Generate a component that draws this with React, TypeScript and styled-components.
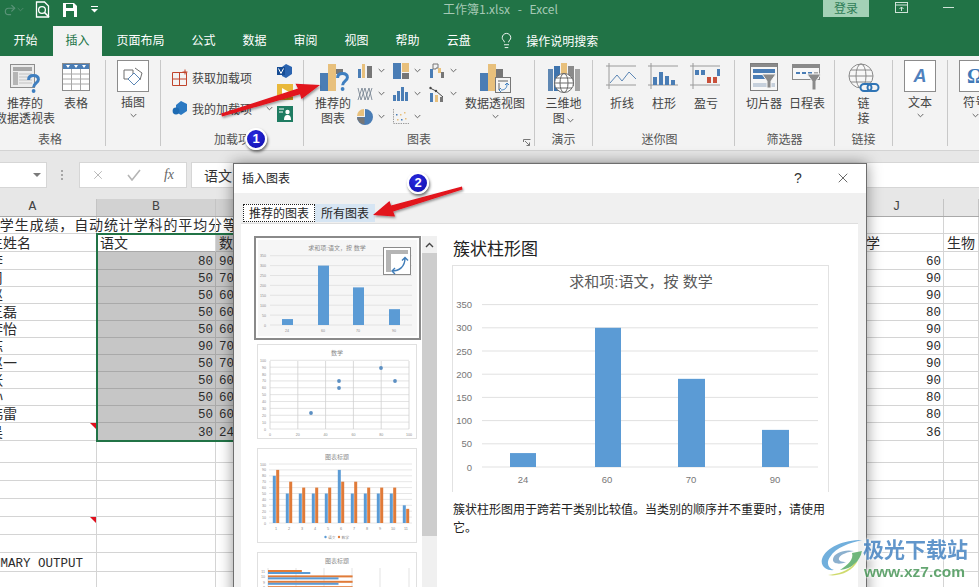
import React from 'react';
import styled, { createGlobalStyle } from 'styled-components';
import { Lightbulb, Redo2, X } from 'lucide-react';

const SANS = `"Noto Sans CJK SC", "Liberation Sans", sans-serif`;
const CELL = `"Liberation Sans", "Noto Sans CJK SC", sans-serif`;
const MONO = `"Liberation Mono", "Noto Sans CJK SC", monospace`;
const BLUE = '#4a7db5';
const GOLD = '#e8c07c';
const GREY = '#767676';

const Global = createGlobalStyle`
  html, body { margin: 0; padding: 0; background: #fff; }
  * { box-sizing: border-box; }
`;

const Page = styled.div`
  position: relative;
  width: 979px;
  height: 587px;
  overflow: hidden;
  display: flex;
  flex-direction: column;
  background: #fff;
  font-family: ${SANS};
  font-size: 12px;
  color: #444;
`;

/* ---------- title bar ---------- */
const TitleBar = styled.header`
  height: 25px;
  flex: none;
  display: flex;
  background: #217346;
`;
const QuickAccess = styled.div`
  width: 443px;
  flex: none;
  display: flex;
  align-items: center;
  padding: 0 0 6px 3px;
  color: #5a9378;
`;
const QuickIcon = styled.svg<{ $gap: number }>`
  margin-left: ${p => p.$gap}px;
  flex: none;
`;
const DocTitle = styled.div`
  width: 380px;
  flex: none;
  padding-top: 1px;
  line-height: 16px;
  color: #a5c9b5;
  word-spacing: 5px;
`;
const SignIn = styled.div`
  width: 46px;
  height: 17px;
  flex: none;
  background: #a3d1b6;
  color: #2f7d56;
  text-align: center;
  line-height: 16px;
`;
const WindowIcon = styled.svg<{ $gap: number }>`
  margin: 2px 0 0 ${p => p.$gap}px;
  flex: none;
`;

/* ---------- tabs ---------- */
const TabBar = styled.nav`
  height: 31px;
  flex: none;
  display: flex;
  background: #217346;
  color: #fff;
`;
const Tab = styled.div<{ $active?: boolean }>`
  flex: none;
  padding: ${p => (p.$active ? '0 12.5px' : '0 13.5px')};
  margin: ${p => (p.$active ? '1px 1px 0 2px' : '0')};
  background: ${p => (p.$active ? '#f3f3f3' : 'transparent')};
  color: ${p => (p.$active ? '#217346' : '#fff')};
  line-height: ${p => (p.$active ? '28px' : '30px')};
`;
const SearchHint = styled.div`
  display: flex;
  align-items: center;
  gap: 11px;
  margin-left: 14px;
  padding-bottom: 1px;
`;

/* ---------- ribbon ---------- */
const Ribbon = styled.section`
  height: 95px;
  flex: none;
  display: flex;
  overflow: hidden;
  background: #f3f3f3;
  border-bottom: 1px solid #d3d3d3;
`;
const Group = styled.div<{ $w: number; $pad?: number }>`
  position: relative;
  width: ${p => p.$w}px;
  flex: none;
  display: flex;
  flex-direction: column;
  padding-left: ${p => p.$pad ?? 0}px;
`;
const GroupBody = styled.div`
  height: 74px;
  flex: none;
  display: flex;
`;
const GroupLabel = styled.div<{ $shift?: number }>`
  height: 18px;
  line-height: 18px;
  text-align: center;
  color: #555;
  margin-left: ${p => p.$shift ?? 0}px;
`;
const Divider = styled.div`
  width: 1px;
  flex: none;
  margin: 4px 0 4px;
  background: #c8c8c8;
`;
const BigButton = styled.div<{ $w: number; $shift?: number }>`
  width: ${p => p.$w}px;
  flex: none;
  margin-left: ${p => p.$shift ?? 0}px;
  padding-top: 7px;
  display: flex;
  flex-direction: column;
  align-items: center;
`;
const BigIcon = styled.div`
  height: 32px;
  flex: none;
  display: flex;
  align-items: flex-start;
  justify-content: center;
`;
const BigLabel = styled.div`
  line-height: 15px;
  text-align: center;
  white-space: nowrap;
  color: #444;
`;
const BoxButton = styled.div<{ $w: number }>`
  width: ${p => p.$w}px;
  flex: none;
  padding-top: 4px;
  display: flex;
  flex-direction: column;
  align-items: center;
`;
const IconBox = styled.div`
  width: 32px;
  height: 32px;
  flex: none;
  margin-bottom: 2px;
  display: flex;
  align-items: center;
  justify-content: center;
  background: #fff;
  border: 1px solid #8c8c8c;
`;
const BoxGlyph = styled.span`
  font-family: "Liberation Serif", serif;
  font-weight: 700;
  font-size: 20px;
  color: #3f79b8;
`;
const ArrowSlot = styled.div`
  height: 12px;
  display: flex;
  align-items: center;
`;
const AddinColumn = styled.div`
  width: 116px;
  flex: none;
  padding: 9px 0 0 11px;
  display: flex;
  flex-direction: column;
  gap: 7px;
`;
const AddinRow = styled.div`
  height: 24px;
  display: flex;
  align-items: center;
  gap: 3px;
  white-space: nowrap;
`;
const AddinChevron = styled.span`
  margin-left: 11px;
  display: flex;
`;
const AddinIcons = styled.div`
  padding-top: 8px;
  display: flex;
  flex-direction: column;
  gap: 6px;
`;
const SmallGrid = styled.div`
  width: 108px;
  flex: none;
  padding-top: 3px;
  display: grid;
  grid-template-columns: repeat(3, 36px);
  grid-auto-rows: 23px;
`;
const SmallCell = styled.div`
  display: flex;
  align-items: center;
  gap: 5px;
`;
const Launcher = styled.svg`
  position: absolute;
  right: 3px;
  bottom: 3px;
`;

const Chev = ({ color = '#666' }: { color?: string }) => (
  <svg width="7" height="5" viewBox="0 0 7 5">
    <path d="M.7 1 3.5 3.8 6.3 1" fill="none" stroke={color} strokeWidth="1" />
  </svg>
);

/* ---------- ribbon icons ---------- */
const Question = ({ x, y }: { x: number; y: number }) => (
  <g transform={`translate(${x} ${y})`}>
    <path d="M1.6 6C1.6 3 3.6 1.6 6.4 1.6S11.4 3 11.4 5.6c0 3.2-4.8 3.4-4.8 7.6" fill="none" stroke="#3f7fc0" strokeWidth="3" />
    <circle cx="6.6" cy="17" r="1.9" fill="#3f7fc0" />
  </g>
);
const RecPivotIcon = () => (
  <svg width="30" height="32" viewBox="0 0 30 32">
    <rect x=".5" y="1.5" width="24" height="23" fill="#ececec" stroke="#8d8d8d" />
    <rect x="3" y="4" width="19" height="4" fill="#a8a8a8" />
    <rect x="3" y="9" width="5" height="13" fill="#b5b5b5" />
    <path d="M9 11h13M9 14h13M9 17h13M9 20h13" stroke="#c2c2c2" />
    <Question x={17} y={11} />
  </svg>
);
const TableIcon = () => (
  <svg width="28" height="29" viewBox="0 0 28 29">
    <rect x=".5" y=".5" width="27" height="27" fill="#fff" stroke="#8d8d8d" />
    <rect x="1" y="1" width="26" height="5" fill="#4a7db5" />
    <path d="M4 2h4L6 5zM12 2h4l-2 3zM20 2h4l-2 3z" fill="#fff" />
    <path d="M1 11h26M1 16h26M1 21h26M9.5 6v21M18.5 6v21" stroke="#a8a8a8" />
  </svg>
);
const ShapesIcon = () => (
  <svg width="22" height="22" viewBox="0 0 22 22">
    <path d="M2 5h9v9H2z" fill="none" stroke="#6f6f6f" />
    <path d="M13 3l7 5-2 7" fill="none" stroke="#6f6f6f" />
    <path d="M12 8l6 6-6 6-6-6z" fill="#fff" stroke="#5b86b5" />
  </svg>
);
const StoreIcon = () => (
  <svg width="17" height="17" viewBox="0 0 17 17">
    <path d="M.5 3.5h14v13H.5zM7.5 3.5v13M.5 10h14" fill="none" stroke="#c0442c" />
    <path d="M13 .5v5M10.5 3h5" stroke="#c0442c" />
  </svg>
);
const MyAddinIcon = () => (
  <svg width="17" height="17" viewBox="0 0 17 17">
    <path d="M9 1l6 3v7l-6 4-5-3V5z" fill="#2b79c2" />
    <circle cx="4" cy="11" r="3.4" fill="#1e6bb3" />
  </svg>
);
const VisioIcon = () => (
  <svg width="16" height="14" viewBox="0 0 16 14">
    <path d="M9 0l6 3v7l-6 4-4-2V3z" fill="#2b64b0" />
    <rect x="0" y="3" width="8" height="8" fill="#174d94" />
    <path d="M1.5 4.5 4 9.5l2.5-5" fill="none" stroke="#fff" />
  </svg>
);
const PlayIcon = () => (
  <svg width="16" height="16" viewBox="0 0 16 16">
    <rect width="16" height="16" fill="#e9b83a" />
    <path d="M5 4l7 4-7 4z" fill="#fff" />
    <rect y="13" width="16" height="3" fill="#c98f1c" />
  </svg>
);
const PersonIcon = () => (
  <svg width="16" height="16" viewBox="0 0 16 16">
    <rect width="16" height="16" fill="#1f7c62" />
    <path d="M2 3h5M2 6h4" stroke="#fff" />
    <circle cx="10.5" cy="6" r="2.2" fill="#fff" />
    <path d="M7 14c0-4 1.5-5 3.5-5s3.5 1 3.5 5z" fill="#fff" />
  </svg>
);
const RecChartIcon = () => (
  <svg width="32" height="30" viewBox="0 0 32 30">
    <rect x="3" y="10" width="8" height="18" fill={BLUE} />
    <rect x="11" y="1" width="8" height="27" fill={GOLD} />
    <rect x="19" y="6" width="7" height="5" fill={GREY} />
    <Question x={19} y={9} />
  </svg>
);
const ColumnsIcon = () => (
  <svg width="16" height="15" viewBox="0 0 16 15">
    <rect x="1" y="6" width="3" height="9" fill={BLUE} /><rect x="5" y="1" width="3" height="14" fill={GOLD} /><rect x="10" y="3" width="5" height="12" fill={GREY} />
  </svg>
);
const TreemapIcon = () => (
  <svg width="16" height="16" viewBox="0 0 16 16">
    <rect width="8" height="16" fill={BLUE} /><rect x="9" width="7" height="9" fill={GOLD} /><rect x="9" y="10" width="7" height="6" fill={GREY} />
  </svg>
);
const WaterfallIcon = () => (
  <svg width="16" height="15" viewBox="0 0 16 15">
    <path d="M1 15V6h3v9z" fill={BLUE} /><path d="M4 6V1h5v4H7v1z" fill="none" stroke={GREY} /><rect x="9" y="5" width="3" height="5" fill={GOLD} /><rect x="12" y="9" width="3" height="6" fill={GREY} />
  </svg>
);
const StockIcon = () => (
  <svg width="16" height="16" viewBox="0 0 16 16">
    <path d="M1 14 5 2l3 12 4-12 3 12M1 2l3 12 4-12 3 12 4-12" fill="none" stroke="#7b8794" strokeWidth=".9" />
  </svg>
);
const BarsIcon = () => (
  <svg width="16" height="15" viewBox="0 0 16 15">
    <rect x="0" y="9" width="3" height="6" fill={BLUE} /><rect x="4" y="5" width="3" height="10" fill={BLUE} /><rect x="8" y="1" width="3" height="14" fill={BLUE} /><rect x="12" y="6" width="3" height="9" fill={BLUE} />
  </svg>
);
const ComboIcon = () => (
  <svg width="16" height="16" viewBox="0 0 16 16">
    <rect x="1" y="7" width="3" height="9" fill={BLUE} /><rect x="6" y="9" width="3" height="7" fill={GOLD} /><rect x="11" y="11" width="3" height="5" fill={GREY} />
    <path d="M1 2l6 3 7 6" fill="none" stroke="#444" /><circle cx="1.5" cy="2" r="1.2" fill="#444" /><circle cx="7" cy="5" r="1.2" fill="#444" />
  </svg>
);
const PieIcon = () => (
  <svg width="16" height="16" viewBox="0 0 16 16">
    <path d="M8 0a8 8 0 1 1-8 8h8z" fill={BLUE} /><path d="M7 0v7H0a7 7 0 0 1 7-7z" fill={GOLD} /><circle cx="8" cy="8" r="0" />
    <path d="M0 8.5h7.5v7A8 8 0 0 1 0 8.5z" fill={GREY} />
  </svg>
);
const ScatterIcon = () => (
  <svg width="16" height="15" viewBox="0 0 16 15">
    <path d="M.5 0v14.5H16" fill="none" stroke="#9a9a9a" strokeDasharray="1.4 1" />
    <path d="M4 10h1.5v1.5H4zM7 5h1.5v1.5H7zM11 3h1.5v1.5H11zM12 9h1.5v1.5H12z" fill={GOLD} /><path d="M3 5h1.5v1.5H3zM8 10h1.5v1.5H8z" fill={BLUE} />
  </svg>
);
const PivotChartIcon = () => (
  <svg width="32" height="30" viewBox="0 0 32 30">
    <rect x="1" y="10" width="8" height="18" fill={BLUE} /><rect x="9" y="1" width="8" height="27" fill={GOLD} /><rect x="17" y="6" width="7" height="9" fill={GREY} />
    <rect x="16.5" y="14.5" width="15" height="15" fill="#f4f4f4" stroke="#777" />
    <rect x="19" y="17" width="10" height="2" fill="#aaa" /><rect x="19" y="20" width="2" height="7" fill="#aaa" />
    <path d="M22 27c4 0 6-2 6-6m-2 1 2-2 2 2M22 25l-2 2 2 2" fill="none" stroke="#3f7fc0" />
  </svg>
);
const MapIcon = () => (
  <svg width="32" height="31" viewBox="0 0 32 31">
    <rect x="0" y="6" width="5" height="22" fill="#5e87b3" /><rect x="6" y="3" width="6" height="25" fill="#3f74ad" /><rect x="13" y="0" width="6" height="18" fill={GOLD} /><rect x="20" y="3" width="6" height="20" fill="#8a8a8a" /><rect x="27" y="6" width="5" height="22" fill="#a3a3a3" />
    <circle cx="16" cy="20" r="9.5" fill="#fff" stroke="#6a6a6a" />
    <ellipse cx="16" cy="20" rx="4" ry="9.5" fill="none" stroke="#6a6a6a" /><path d="M6.5 20h19M8 15h16M8 25h16" stroke="#6a6a6a" />
  </svg>
);
const Axes = ({ y = 22 }: { y?: number }) => (
  <path d={`M3 0v26M0 3h30M0 ${y}h30`} stroke="#9a9a9a" fill="none" />
);
const SparkLineIcon = () => (
  <svg width="32" height="27" viewBox="0 0 32 27">
    <Axes /><path d="M4 20l7-8 5 6 7-9 7 7" fill="none" stroke="#5b86b5" />
  </svg>
);
const SparkBarIcon = () => (
  <svg width="32" height="27" viewBox="0 0 32 27">
    <Axes /><rect x="5" y="14" width="4" height="8" fill={BLUE} /><rect x="11" y="9" width="4" height="13" fill={BLUE} /><rect x="17" y="13" width="4" height="9" fill={BLUE} /><rect x="23" y="17" width="4" height="5" fill={BLUE} />
  </svg>
);
const SparkWinIcon = () => (
  <svg width="32" height="27" viewBox="0 0 32 27">
    <path d="M3 0v26M0 3h30M0 22h30" stroke="#9a9a9a" fill="none" />
    <rect x="5" y="7" width="4" height="5" fill={BLUE} /><rect x="11" y="7" width="4" height="5" fill={BLUE} /><rect x="17" y="14" width="4" height="6" fill="#c9503a" /><rect x="23" y="14" width="4" height="6" fill="#c9503a" /><rect x="27" y="6" width="3" height="7" fill={BLUE} />
  </svg>
);
const Funnel = ({ x, y }: { x: number; y: number }) => (
  <path transform={`translate(${x} ${y})`} d="M0 0h14L9 7v7H5V7z" fill="#8a8a8a" stroke="#f3f3f3" />
);
const SlicerIcon = () => (
  <svg width="28" height="28" viewBox="0 0 28 28">
    <rect x=".5" y=".5" width="27" height="27" fill="#f7f7f7" stroke="#7d7d7d" />
    <rect x="1" y="1" width="26" height="3" fill="#8a8a8a" />
    <rect x="3" y="6" width="22" height="4" fill="#4a7db5" /><rect x="3" y="12" width="12" height="4" fill="#4a7db5" /><rect x="3" y="20" width="22" height="4" fill="#c6d0dc" />
    <Funnel x={12} y={11} />
  </svg>
);
const TimelineIcon = () => (
  <svg width="30" height="28" viewBox="0 0 30 28">
    <rect x=".5" y="1.5" width="27" height="15" fill="#f7f7f7" stroke="#8a8a8a" /><rect x="1" y="2" width="26" height="3" fill="#8a8a8a" />
    <path d="M4 10h4M10 10h4M16 10h4" stroke="#4a7db5" strokeWidth="2" /><path d="M22 10h4" stroke="#aaa" strokeWidth="2" />
    <path d="M15 11h14l-5 7v9h-4v-9z" fill="#8a8a8a" stroke="#f3f3f3" />
  </svg>
);
const LinkIcon = () => (
  <svg width="32" height="31" viewBox="0 0 32 31">
    <circle cx="13" cy="13" r="12" fill="#f7f7f7" stroke="#8a8a8a" /><ellipse cx="13" cy="13" rx="5" ry="12" fill="none" stroke="#8a8a8a" /><path d="M1 13h24M3 7h20M3 19h20" stroke="#8a8a8a" />
    <rect x="12.5" y="21" width="11" height="7" rx="3.5" fill="#f3f3f3" stroke="#2f74b5" strokeWidth="2" /><rect x="19.5" y="21" width="11" height="7" rx="3.5" fill="none" stroke="#2f74b5" strokeWidth="2" />
  </svg>
);
const TextGlyph = styled.span`
  font-family: "Liberation Sans", sans-serif;
  font-style: italic;
  font-weight: 700;
  font-size: 18px;
  color: #4f81bd;
`;

/* ---------- formula bar ---------- */
const FormulaBar = styled.div`
  height: 39px;
  flex: none;
  display: flex;
  align-items: flex-start;
  padding-top: 11px;
  background: #e7e7e7;
`;
const NameBox = styled.div`
  width: 47px;
  height: 26px;
  flex: none;
  display: flex;
  align-items: center;
  justify-content: flex-end;
  padding-right: 5px;
  background: #fff;
  border: 1px solid #d6d6d6;
  border-left: 0;
`;
const Caret = styled.span`
  width: 0;
  height: 0;
  border-left: 4px solid transparent;
  border-right: 4px solid transparent;
  border-top: 4px solid #7a7a7a;
`;
const Grip = styled.span`
  width: 2px;
  height: 11px;
  margin: 8px 16px 0 14px;
  flex: none;
  background: repeating-linear-gradient(#a6a6a6 0 2px, transparent 2px 4px);
`;
const FormulaButtons = styled.div`
  width: 108px;
  height: 26px;
  flex: none;
  display: flex;
  align-items: center;
  justify-content: space-between;
  padding: 0 12px 0 11px;
  background: #fff;
  border: 1px solid #d6d6d6;
`;
const FxLabel = styled.span`
  font-family: "Liberation Serif", serif;
  font-style: italic;
  font-size: 14px;
  color: #666;
`;
const FormulaInput = styled.div`
  flex: 1;
  height: 26px;
  margin-left: 4px;
  padding-left: 12px;
  background: #fff;
  border: 1px solid #d6d6d6;
  border-right: 0;
  font-size: 14px;
  line-height: 24px;
  color: #333;
`;

/* ---------- sheet ---------- */
const COLS = '97px 119px 20px 614px 94px 35px';
const HeaderRow = styled.div`
  height: 27px;
  flex: none;
  display: grid;
  grid-template-columns: ${COLS};
  align-items: end;
  background: #e7e7e7;
  border-bottom: 1px solid #a9a9a9;
`;
const ColHead = styled.div<{ $sel?: boolean; $inset?: number }>`
  height: 17px;
  padding-right: ${p => p.$inset ?? 0}px;
  line-height: 16px;
  text-align: center;
  font-family: ${MONO};
  font-size: 13px;
  color: #444;
  background: ${p => (p.$sel ? '#d2d2d2' : 'transparent')};
  border-right: 1px solid #c4c4c4;
`;
const Sheet = styled.div`
  position: relative;
  flex: 1;
`;
const Row = styled.div<{ $h: number }>`
  height: ${p => p.$h}px;
  display: grid;
  grid-template-columns: ${COLS};
`;
const Cell = styled.div<{ $sel?: boolean; $white?: boolean; $num?: boolean; $note?: boolean; $mono?: boolean }>`
  position: relative;
  display: flex;
  align-items: flex-end;
  justify-content: ${p => (p.$num ? 'flex-end' : 'flex-start')};
  padding: ${p => (p.$num ? '0 2px 0 0' : '0 0 0 3px')};
  white-space: nowrap;
  font-family: ${p => (p.$mono ? MONO : CELL)};
  font-size: ${p => (p.$mono ? 12.5 : 14)}px;
  line-height: ${p => (p.$mono ? 14 : 16)}px;
  color: #2c2c2c;
  background: ${p => (p.$sel ? '#c6c6c6' : 'transparent')};
  border-right: 1px solid ${p => (p.$sel ? '#a9a9a9' : '#d4d4d4')};
  border-bottom: 1px solid ${p => (p.$sel ? '#a9a9a9' : '#d4d4d4')};
  ${p => p.$white && 'border-bottom-color:#a9a9a9;'}
  &::after {
    content: ${p => (p.$note ? '""' : 'none')};
    position: absolute;
    top: 0;
    right: 0;
    border-top: 6px solid #e0101e;
    border-left: 6px solid transparent;
  }
`;
const CellText = styled.span<{ $indent?: number; $track?: number }>`
  margin-left: ${p => p.$indent ?? 0}px;
  letter-spacing: ${p => p.$track ?? 0}px;
`;
const Digits = styled.span`
  display: block;
  font-family: ${MONO};
  font-size: 12.5px;
  line-height: 14px;
`;
const Selection = styled.div`
  position: absolute;
  left: 96px;
  top: 16px;
  width: 300px;
  height: 209px;
  border: 2px solid #217346;
  pointer-events: none;
`;

/* ---------- dialog ---------- */
const Dialog = styled.div`
  position: absolute;
  left: 233px;
  top: 163px;
  width: 634px;
  height: 440px;
  display: flex;
  flex-direction: column;
  background: #f0f0f0;
  border: 1px solid #6e6e6e;
  box-shadow: 0 0 14px rgba(0, 0, 0, 0.42);
  color: #262626;
`;
const DialogHead = styled.div`
  height: 29px;
  flex: none;
  display: flex;
  align-items: center;
  padding: 0 15px 2px 8px;
  background: #fff;
`;
const DialogTitle = styled.div`
  flex: 1;
`;
const HelpMark = styled.span`
  width: 41px;
  font-family: "Liberation Sans", sans-serif;
  font-size: 14px;
  color: #333;
`;
const DialogTabs = styled.div`
  height: 30px;
  flex: none;
  display: flex;
  align-items: flex-end;
  padding: 0 0 1px 9px;
`;
const DialogTab = styled.div<{ $active?: boolean }>`
  height: 18px;
  padding: 0 5px;
  line-height: 16px;
  background: ${p => (p.$active ? '#fff' : '#d6e5f3')};
  border: 1px ${p => (p.$active ? 'dotted #222' : 'solid #d6e5f3')};
`;
const DialogPanel = styled.div`
  flex: 1;
  display: flex;
  margin: 0 8px 0 7px;
  background: #fff;
  border-top: 1px solid #dedede;
  min-height: 0;
`;
const ThumbColumn = styled.div`
  width: 181px;
  flex: none;
  padding: 12px 0 0 13px;
  overflow: hidden;
`;
const Thumb = styled.div<{ $selected?: boolean; $gap?: number }>`
  display: flex;
  width: ${p => (p.$selected ? 167 : 160)}px;
  height: ${p => (p.$selected ? 104 : 95)}px;
  margin: ${p => p.$gap ?? 0}px 0 0 ${p => (p.$selected ? 0 : 3)}px;
  background: #fff;
  border: ${p => (p.$selected ? '2px solid #8a8a8a' : '1px solid #e0e0e0')};
  padding: ${p => (p.$selected ? 2 : 0)}px;
`;
const Scrollbar = styled.div`
  width: 15px;
  flex: none;
  margin-top: 12px;
  background: #f0f0f0;
`;
const ScrollArrow = styled.div`
  height: 17px;
  display: flex;
  align-items: center;
  justify-content: center;
`;
const ScrollThumb = styled.div`
  height: 283px;
  background: #cdcdcd;
`;
const Details = styled.div`
  flex: 1;
  padding: 12px 0 0 16px;
`;
const DetailTitle = styled.div`
  font-size: 17px;
  line-height: 24px;
  color: #222;
`;
const MainChart = styled.div`
  display: flex;
  width: 377px;
  height: 227px;
  margin: 5px 0 0 -1px;
  border: 1px solid #e2e2e2;
  border-bottom: 0;
`;
const DetailText = styled.p`
  width: 376px;
  margin: 8px 0 0;
  line-height: 18px;
  color: #222;
`;

/* ---------- overlays ---------- */
const Marks = styled.svg`
  position: absolute;
  inset: 0;
  pointer-events: none;
`;
const Badge = styled.div<{ $x: number; $y: number }>`
  position: absolute;
  left: ${p => p.$x - 11}px;
  top: ${p => p.$y - 11}px;
  width: 22px;
  height: 22px;
  border-radius: 50%;
  background: radial-gradient(circle at 40% 35%, #2a2ae0, #0d0da8);
  border: 2px solid #fff;
  box-shadow: 1px 2px 3px rgba(0, 0, 0, 0.55);
  color: #fff;
  font-family: "Liberation Sans", sans-serif;
  font-weight: 700;
  font-size: 13px;
  line-height: 18px;
  text-align: center;
`;
const Watermark = styled.div`
  position: absolute;
  left: 820px;
  top: 537px;
  display: flex;
  opacity: 0.88;
  pointer-events: none;
`;
const WatermarkText = styled.div`
  display: flex;
  flex-direction: column;
  margin-left: 1px;
`;
const WatermarkName = styled.div`
  font-weight: 700;
  font-size: 21px;
  line-height: 23px;
  color: #4c88c4;
  text-shadow: 0 0 3px #fff, 0 0 3px #fff;
  white-space: nowrap;
`;
const WatermarkUrl = styled.div`
  margin: 3px 0 0 1px;
  font-family: "Liberation Sans", sans-serif;
  font-weight: 700;
  font-size: 15.5px;
  line-height: 17px;
  color: #4f9a5e;
  text-shadow: 0 0 3px #fff, 0 0 3px #fff;
`;

/* ---------- chart drawings ---------- */
const CHART_FONT = 'Liberation Sans, Noto Sans CJK SC, sans-serif';
const MainChartDrawing = () => {
  const y0 = 467;
  const step = 23.2;
  const bars = [
    [510, 26, 30, '24', 523],
    [595, 26, 300, '60', 607],
    [678, 27, 190, '70', 691],
    [762, 27, 80, '90', 775],
  ] as const;
  return (
    <svg width="100%" height="100%" viewBox="453 266 375 226" fontFamily={CHART_FONT}>
      <text x="641" y="287" fontSize="15" textAnchor="middle" fill="#595959">求和项:语文，按 数学</text>
      {[0, 1, 2, 3, 4, 5, 6, 7].map(i => (
        <g key={i}>
          <line x1="482" x2="818" y1={y0 - i * step} y2={y0 - i * step} stroke="#e1e1e1" />
          <text x="472" y={y0 - i * step + 3.5} fontSize="9.5" textAnchor="end" fill="#777">{i * 50}</text>
        </g>
      ))}
      {bars.map(([x, w, v, label, cx]) => (
        <g key={label}>
          <rect x={x} y={y0 - (v / 50) * step} width={w} height={(v / 50) * step} fill="#5b9bd5" />
          <text x={cx} y="483" fontSize="9.5" textAnchor="middle" fill="#777">{label}</text>
        </g>
      ))}
    </svg>
  );
};
const RecommendedThumb = () => {
  const y0 = 325;
  const step = 9.9;
  const bars = [[282, 30, '24', 287], [318, 300, '60', 323], [353, 190, '70', 358], [389, 80, '90', 394]] as const;
  return (
    <svg width="100%" height="100%" viewBox="258 240 159 96" fontFamily={CHART_FONT}>
      <rect x="258" y="240" width="159" height="96" fill="#f6f6f6" />
      <text x="337" y="250" fontSize="6" textAnchor="middle" fill="#8a8a8a">求和项:语文，按 数学</text>
      {[0, 1, 2, 3, 4, 5, 6, 7].map(i => (
        <g key={i}>
          <line x1="270" x2="412" y1={y0 - i * step} y2={y0 - i * step} stroke="#dedede" strokeWidth=".8" />
          <text x="266" y={y0 - i * step + 1.5} fontSize="3.6" textAnchor="end" fill="#8a8a8a">{i * 50}</text>
        </g>
      ))}
      {bars.map(([x, v, label, cx]) => (
        <g key={label}>
          <rect x={x} y={y0 - (v / 50) * step} width="11" height={(v / 50) * step} fill="#5b9bd5" />
          <text x={cx} y="332" fontSize="3.6" textAnchor="middle" fill="#8a8a8a">{label}</text>
        </g>
      ))}
      <rect x="383.5" y="247.5" width="27" height="27" fill="#fff" stroke="#8a8a8a" />
      <rect x="386" y="250" width="22" height="4" fill="#b5b5b5" />
      <rect x="386" y="250" width="5" height="22" fill="#b5b5b5" />
      <path d="M392 271c7 0 13-4 13-13m-3 2.5 3-3 3 3M395 268l-3 3 3 3" fill="none" stroke="#3f7cb8" strokeWidth="1.4" />
    </svg>
  );
};
const ScatterThumb = () => {
  const ys = [0, 1, 2, 3, 4, 5, 6, 7, 8, 9, 10];
  const xs = [270, 297.8, 325.6, 353.4, 381.2, 409];
  const pts = [[311, 413], [339, 381], [339, 388], [381, 368], [395, 381]];
  return (
    <svg width="100%" height="100%" viewBox="258 345 158 93" fontFamily={CHART_FONT}>
      <text x="337" y="355" fontSize="6" textAnchor="middle" fill="#8a8a8a">数学</text>
      {ys.map(i => (
        <g key={i}>
          <line x1="270" x2="409" y1={429 - i * 6.87} y2={429 - i * 6.87} stroke="#dcdcdc" strokeWidth=".8" />
          <text x="266" y={430.5 - i * 6.87} fontSize="3.6" textAnchor="end" fill="#8a8a8a">{i * 10}</text>
        </g>
      ))}
      {xs.map((x, i) => (
        <g key={x}>
          <line x1={x} x2={x} y1="361" y2="429" stroke="#cfcfcf" strokeWidth=".8" />
          <text x={x} y="436" fontSize="3.6" textAnchor="middle" fill="#8a8a8a">{i * 20}</text>
        </g>
      ))}
      {pts.map(([x, y]) => <circle key={`${x}-${y}`} cx={x} cy={y} r="1.9" fill="#5b8fc2" />)}
    </svg>
  );
};
const YU = [80, 50, 50, 50, 50, 90, 50, 50, 50, 50, 30];
const SHU = [90, 70, 60, 60, 60, 70, 70, 60, 60, 60, 24];
const ClusterThumb = () => (
  <svg width="100%" height="100%" viewBox="258 449 158 93" fontFamily={CHART_FONT}>
    <text x="337" y="459" fontSize="6" textAnchor="middle" fill="#8a8a8a">图表标题</text>
    {[0, 1, 2, 3, 4, 5, 6, 7, 8, 9, 10].map(i => (
      <g key={i}>
        <line x1="269" x2="412" y1={523 - i * 5.9} y2={523 - i * 5.9} stroke="#e0e0e0" strokeWidth=".8" />
        <text x="266" y={524.5 - i * 5.9} fontSize="3.6" textAnchor="end" fill="#8a8a8a">{i * 10}</text>
      </g>
    ))}
    {YU.map((v, i) => {
      const cx = 276 + i * 13;
      return (
        <g key={i}>
          <rect x={cx - 3.2} y={523 - v * 0.59} width="3" height={v * 0.59} fill="#5b9bd5" />
          <rect x={cx + 0.2} y={523 - SHU[i] * 0.59} width="3" height={SHU[i] * 0.59} fill="#e07b39" />
          <text x={cx} y="530" fontSize="3.8" textAnchor="middle" fill="#8a8a8a">{i + 1}</text>
        </g>
      );
    })}
    <circle cx="325.5" cy="537" r="1.2" fill="#5b9bd5" />
    <text x="328" y="538.5" fontSize="3.8" fill="#8a8a8a">语文</text>
    <circle cx="339" cy="537" r="1.2" fill="#e07b39" />
    <text x="341.5" y="538.5" fontSize="3.8" fill="#8a8a8a">数学</text>
  </svg>
);
const BarThumb = () => (
  <svg width="100%" height="100%" viewBox="258 553 158 93" fontFamily={CHART_FONT}>
    <text x="337" y="563" fontSize="6" textAnchor="middle" fill="#8a8a8a">图表标题</text>
    {[268, 296, 324, 352, 380, 409].map(x => (
      <line key={x} x1={x} x2={x} y1="568" y2="640" stroke="#dcdcdc" strokeWidth=".8" />
    ))}
    {[10, 9, 8, 7].map((idx, r) => (
      <g key={idx}>
        <rect x="268" y={570 + r * 5.4} width={SHU[idx] * 1.41} height="2" fill="#e07b39" />
        <rect x="268" y={572 + r * 5.4} width={YU[idx] * 1.41} height="2" fill="#5b9bd5" />
        <text x="265" y={573 + r * 5.4} fontSize="3.6" textAnchor="end" fill="#8a8a8a">{idx + 1}</text>
      </g>
    ))}
  </svg>
);

/* ---------- sheet data ---------- */
const NAMES = ['李', '周', '赵', '王磊', '李怡', '陈', '赵一', '张', '孙', '韩雷', '吴'];
const BIO = [60, 90, 90, 80, 90, 90, 90, 90, 80, 80, 36];
const DATA_H = [18, 17, 17, 17, 17, 17, 17, 17, 17, 17, 18];
const TAIL_H = [22, 18, 18, 18, 18, 18, 19, 20];

const TABS = ['开始', '插入', '页面布局', '公式', '数据', '审阅', '视图', '帮助', '云盘'];

export default function App() {
  return (
    <Page>
      <Global />
      <TitleBar>
        <QuickAccess>
          <Redo2 size={14} strokeWidth={2} />
          <Chev color="#4f8a6c" />
          <QuickIcon $gap={11} width="16" height="17" viewBox="0 0 16 17">
            <path d="M1.5 1h8l4 4v11h-12z" fill="none" stroke="#fff" strokeWidth="1.3" />
            <circle cx="7" cy="9" r="3.4" fill="none" stroke="#fff" strokeWidth="1.3" />
            <path d="M9.5 11.5l4.5 4.5" stroke="#fff" strokeWidth="1.6" />
          </QuickIcon>
          <QuickIcon $gap={12} width="14" height="14" viewBox="0 0 14 14">
            <path d="M0 0h11l3 3v11H0z" fill="#fff" />
            <rect x="3" y="1" width="7" height="4" fill="#217346" />
            <rect x="3" y="8" width="8" height="6" fill="#217346" />
          </QuickIcon>
          <QuickIcon $gap={14} width="7" height="7" viewBox="0 0 7 7">
            <path d="M0 .5h7" stroke="#fff" />
            <path d="M0 3h7L3.5 6.5z" fill="#fff" />
          </QuickIcon>
        </QuickAccess>
        <DocTitle>工作簿1.xlsx - Excel</DocTitle>
        <SignIn>登录</SignIn>
        <WindowIcon $gap={26} width="13" height="11" viewBox="0 0 13 11">
          <rect x=".5" y=".5" width="12" height="10" fill="none" stroke="#cfe3d8" />
          <path d="M.5 3h12M6.5 9V5M4.5 7l2-2 2 2" fill="none" stroke="#cfe3d8" />
        </WindowIcon>
        <WindowIcon $gap={35} width="11" height="7" viewBox="0 0 11 7">
          <path d="M0 5.5h11" stroke="#cfe3d8" />
        </WindowIcon>
      </TitleBar>

      <TabBar>
        {TABS.map(t => <Tab key={t} $active={t === '插入'}>{t}</Tab>)}
        <SearchHint>
          <Lightbulb size={17} strokeWidth={1.3} />
          <span>操作说明搜索</span>
        </SearchHint>
      </TabBar>

      <Ribbon>
        <Group $w={105}>
          <GroupBody>
            <BigButton $w={56} $shift={-3}>
              <BigIcon><RecPivotIcon /></BigIcon>
              <BigLabel>推荐的<br />数据透视表</BigLabel>
            </BigButton>
            <BigButton $w={46}>
              <BigIcon><TableIcon /></BigIcon>
              <BigLabel>表格</BigLabel>
            </BigButton>
          </GroupBody>
          <GroupLabel $shift={-5}>表格</GroupLabel>
        </Group>
        <Divider />
        <Group $w={54}>
          <GroupBody>
            <BoxButton $w={54}>
              <IconBox><ShapesIcon /></IconBox>
              <BigLabel>插图</BigLabel>
              <ArrowSlot><Chev /></ArrowSlot>
            </BoxButton>
          </GroupBody>
        </Group>
        <Divider />
        <Group $w={142}>
          <GroupBody>
            <AddinColumn>
              <AddinRow><StoreIcon /><span>获取加载项</span></AddinRow>
              <AddinRow><MyAddinIcon /><span>我的加载项</span><AddinChevron><Chev /></AddinChevron></AddinRow>
            </AddinColumn>
            <AddinIcons>
              <VisioIcon />
              <PlayIcon />
              <PersonIcon />
            </AddinIcons>
          </GroupBody>
          <GroupLabel>加载项</GroupLabel>
        </Group>
        <Divider />
        <Group $w={230} $pad={5}>
          <GroupBody>
            <BigButton $w={48}>
              <BigIcon><RecChartIcon /></BigIcon>
              <BigLabel>推荐的<br />图表</BigLabel>
            </BigButton>
            <SmallGrid>
              {[ColumnsIcon, TreemapIcon, WaterfallIcon, StockIcon, BarsIcon, ComboIcon, PieIcon, ScatterIcon].map((Icon, i) => (
                <SmallCell key={i}><Icon /><Chev /></SmallCell>
              ))}
            </SmallGrid>
            <BigButton $w={60}>
              <BigIcon><PivotChartIcon /></BigIcon>
              <BigLabel>数据透视图</BigLabel>
              <ArrowSlot><Chev /></ArrowSlot>
            </BigButton>
          </GroupBody>
          <GroupLabel $shift={-5}>图表</GroupLabel>
          <Launcher width="8" height="8" viewBox="0 0 8 8">
            <path d="M.5 3V.5H7.5M2 2l4.5 4.5M6.5 3.5v3h-3" fill="none" stroke="#777" />
          </Launcher>
        </Group>
        <Divider />
        <Group $w={57}>
          <GroupBody>
            <BigButton $w={57}>
              <BigIcon><MapIcon /></BigIcon>
              <BigLabel>三维地<br />图 <Chev /></BigLabel>
            </BigButton>
          </GroupBody>
          <GroupLabel>演示</GroupLabel>
        </Group>
        <Divider />
        <Group $w={141} $pad={8}>
          <GroupBody>
            <BigButton $w={42}><BigIcon><SparkLineIcon /></BigIcon><BigLabel>折线</BigLabel></BigButton>
            <BigButton $w={42}><BigIcon><SparkBarIcon /></BigIcon><BigLabel>柱形</BigLabel></BigButton>
            <BigButton $w={42}><BigIcon><SparkWinIcon /></BigIcon><BigLabel>盈亏</BigLabel></BigButton>
          </GroupBody>
          <GroupLabel $shift={-16}>迷你图</GroupLabel>
        </Group>
        <Divider />
        <Group $w={99} $pad={8}>
          <GroupBody>
            <BigButton $w={42}><BigIcon><SlicerIcon /></BigIcon><BigLabel>切片器</BigLabel></BigButton>
            <BigButton $w={44}><BigIcon><TimelineIcon /></BigIcon><BigLabel>日程表</BigLabel></BigButton>
          </GroupBody>
          <GroupLabel $shift={-8}>筛选器</GroupLabel>
        </Group>
        <Divider />
        <Group $w={57}>
          <GroupBody>
            <BigButton $w={57}>
              <BigIcon><LinkIcon /></BigIcon>
              <BigLabel>链<br />接</BigLabel>
            </BigButton>
          </GroupBody>
          <GroupLabel>链接</GroupLabel>
        </Group>
        <Divider />
        <Group $w={54}>
          <GroupBody>
            <BoxButton $w={54}>
              <IconBox><TextGlyph>A</TextGlyph></IconBox>
              <BigLabel>文本</BigLabel>
              <ArrowSlot><Chev /></ArrowSlot>
            </BoxButton>
          </GroupBody>
        </Group>
        <Divider />
        <Group $w={60}>
          <GroupBody>
            <BoxButton $w={54}>
              <IconBox><BoxGlyph>Ω</BoxGlyph></IconBox>
              <BigLabel>符号</BigLabel>
              <ArrowSlot><Chev /></ArrowSlot>
            </BoxButton>
          </GroupBody>
        </Group>
      </Ribbon>

      <FormulaBar>
        <NameBox><Caret /></NameBox>
        <Grip />
        <FormulaButtons>
          <X size={14} color="#b5b5b5" strokeWidth={1.6} />
          <svg width="14" height="12" viewBox="0 0 14 12"><path d="M1 6l4 5 8-10" fill="none" stroke="#b5b5b5" strokeWidth="1.6" /></svg>
          <FxLabel>fx</FxLabel>
        </FormulaButtons>
        <FormulaInput>语文</FormulaInput>
      </FormulaBar>

      <HeaderRow>
        <ColHead $inset={31}>A</ColHead>
        <ColHead $sel>B</ColHead>
        <ColHead $sel />
        <ColHead />
        <ColHead>J</ColHead>
        <ColHead />
      </HeaderRow>

      <Sheet>
        <Row $h={17}>
          <Cell><CellText $indent={-18} $track={0.87}>入学生成绩，自动统计学科的平均分等级</CellText></Cell>
          <Cell /><Cell /><Cell /><Cell /><Cell />
        </Row>
        <Row $h={18}>
          <Cell><CellText $indent={-28}>学生姓名</CellText></Cell>
          <Cell $white>语文</Cell>
          <Cell $sel>数学</Cell>
          <Cell />
          <Cell><CellText $indent={-1}>数学</CellText></Cell>
          <Cell>生物</Cell>
        </Row>
        {NAMES.map((name, i) => (
          <Row key={name} $h={DATA_H[i]}>
            <Cell $note={i === 10}><CellText $indent={-14}>{name}</CellText></Cell>
            <Cell $sel $num><Digits>{YU[i]}</Digits></Cell>
            <Cell $sel><Digits>{SHU[i]}</Digits></Cell>
            <Cell />
            <Cell $num><Digits>{BIO[i]}</Digits></Cell>
            <Cell />
          </Row>
        ))}
        {TAIL_H.map((h, i) => (
          <Row key={i} $h={h}>
            <Cell $note={i === 4} $mono>{i === 6 && <CellText $indent={-25}>SUMMARY OUTPUT</CellText>}</Cell>
            <Cell /><Cell /><Cell /><Cell /><Cell />
          </Row>
        ))}
        <Selection />
      </Sheet>

      <Dialog>
        <DialogHead>
          <DialogTitle>插入图表</DialogTitle>
          <HelpMark>?</HelpMark>
          <X size={16} strokeWidth={1.1} color="#333" />
        </DialogHead>
        <DialogTabs>
          <DialogTab $active>推荐的图表</DialogTab>
          <DialogTab>所有图表</DialogTab>
        </DialogTabs>
        <DialogPanel>
          <ThumbColumn>
            <Thumb $selected><RecommendedThumb /></Thumb>
            <Thumb $gap={4}><ScatterThumb /></Thumb>
            <Thumb $gap={9}><ClusterThumb /></Thumb>
            <Thumb $gap={9}><BarThumb /></Thumb>
          </ThumbColumn>
          <Scrollbar>
            <ScrollArrow>
              <svg width="9" height="6" viewBox="0 0 9 6"><path d="M1 5l3.5-3.5L8 5" fill="none" stroke="#444" strokeWidth="1.4" /></svg>
            </ScrollArrow>
            <ScrollThumb />
          </Scrollbar>
          <Details>
            <DetailTitle>簇状柱形图</DetailTitle>
            <MainChart><MainChartDrawing /></MainChart>
            <DetailText>簇状柱形图用于跨若干类别比较值。当类别的顺序并不重要时，请使用它。</DetailText>
          </Details>
        </DialogPanel>
      </Dialog>

      <Marks width="979" height="587" viewBox="0 0 979 587">
        <defs>
          <filter id="arrowShadow" x="-10%" y="-30%" width="120%" height="170%">
            <feDropShadow dx="1" dy="1.5" stdDeviation="1" floodOpacity="0.4" />
          </filter>
        </defs>
        <polygon points="221,113.6 298,88.4 295.5,83.7 320,85 301.5,99 300,94.3 222,116.6" fill="#e2121f" filter="url(#arrowShadow)" />
        <polygon points="462,186.6 391,205.4 389.5,201 373,215 395,216.5 393.2,211.4 462.5,189.4" fill="#e2121f" filter="url(#arrowShadow)" />
      </Marks>
      <Badge $x={256} $y={139}>1</Badge>
      <Badge $x={418} $y={183}>2</Badge>

      <Watermark>
        <svg width="42" height="40" viewBox="0 0 42 40">
          <path d="M42 3C24 3 6 10 2 22c-2 8 6 12 12 11-6-2-8-7-4-13C16 10 30 6 42 3z" fill="#5ea4d8" />
          <path d="M34 14c-10-2-20 2-21 8-1 5 7 6 13 3-4 0-8-1-7-4 2-4 9-6 15-7z" fill="#7da6c8" />
          <path d="M42 14c-2 10-10 18-22 19 8-5 14-11 12-17z" fill="#5cae6a" />
          <path d="M38 24C32 34 20 40 8 38c10-1 20-4 26-11z" fill="#c9d65a" />
        </svg>
        <WatermarkText>
          <WatermarkName>极光下载站</WatermarkName>
          <WatermarkUrl>www.xz7.com</WatermarkUrl>
        </WatermarkText>
      </Watermark>
    </Page>
  );
}
